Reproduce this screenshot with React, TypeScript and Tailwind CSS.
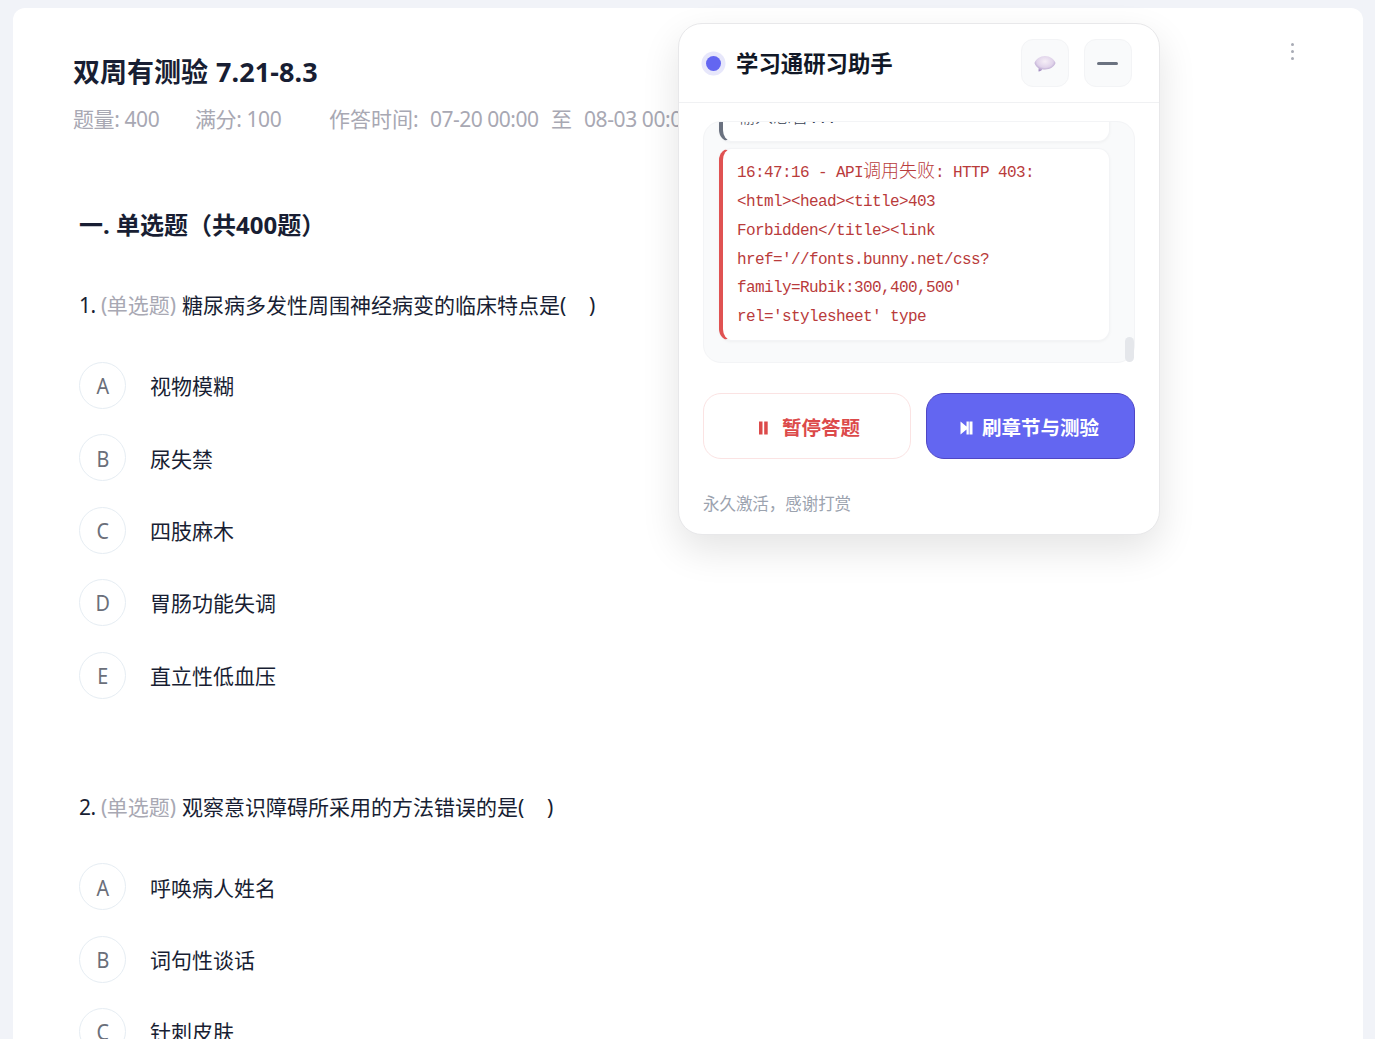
import React from 'react';

type Option = { key: string; text: string };

function Choice({ option }: { option: Option }) {
  return (
    <li className="flex h-[47px] items-center">
      <span className="flex h-[47px] w-[47px] shrink-0 items-center justify-center rounded-full border border-[#e6edf3] pt-[3px] text-[21px] text-[#6b6f7a]">
        <span className="inline-block scale-x-[0.94]">{option.key}</span>
      </span>
      <span className="ml-6 pt-[3px]">{option.text}</span>
    </li>
  );
}

function Question({ index, title, options }: { index: number; title: string; options: Option[] }) {
  return (
    <section>
      <h3 className="flex h-[30px] items-center whitespace-pre">
        <span className="w-[22px] tracking-[-0.6px]">{index}.</span>
        <span className="w-[81px] text-[#a8a8b3]">
          <span className="tracking-[-0.5px]">(</span>单选题<span>)</span>
        </span>
        <span>{title}</span>
        <span className="w-[29px]">(</span>
        <span>)</span>
      </h3>
      <ul className="mt-[41px] flex flex-col gap-[25.4px]">
        {options.map((o) => (
          <Choice key={o.key} option={o} />
        ))}
      </ul>
    </section>
  );
}

function Paper() {
  return (
    <main className="relative ml-[13px] mt-2 h-[1100px] w-[1350px] rounded-xl bg-white pl-[60px] pt-[46px]">
      <h1 className="h-[36px] text-[27px] leading-[36px] font-bold">
        双周有测验<span className="ml-[8px] text-[27px] tracking-[0.1px]">7.21-8.3</span>
      </h1>
      <div className="mt-[15px] flex h-[30px] items-center whitespace-pre text-[#a8a8b3]">
        <span className="w-[122px] tracking-[-0.4px]">题量: 400</span>
        <span className="w-[134px] tracking-[-0.4px]">满分: 100</span>
        <span className="w-[101px]">作答时间:</span>
        <span className="w-[121px] tracking-[-0.5px]">07-20 00:00</span>
        <span className="w-[33px]">至</span>
        <span className="tracking-[-0.4px]">08-03 00:00</span>
      </div>
      <div className="ml-[6px]">
        <h2 className="mt-[72px] h-[36px] text-[24px] leading-[36px] font-bold">
          一. 单选题（共<span>400</span>题）
        </h2>
        <div className="mt-[48px]">
          <Question
            index={1}
            title="糖尿病多发性周围神经病变的临床特点是"
            options={[
              { key: 'A', text: '视物模糊' },
              { key: 'B', text: '尿失禁' },
              { key: 'C', text: '四肢麻木' },
              { key: 'D', text: '胃肠功能失调' },
              { key: 'E', text: '直立性低血压' },
            ]}
          />
        </div>
        <div className="mt-[93.8px]">
          <Question
            index={2}
            title="观察意识障碍所采用的方法错误的是"
            options={[
              { key: 'A', text: '呼唤病人姓名' },
              { key: 'B', text: '词句性谈话' },
              { key: 'C', text: '针刺皮肤' },
            ]}
          />
        </div>
      </div>
      <button aria-label="更多" className="absolute top-[35px] right-[69px] flex flex-col gap-[3.7px]">
        <i className="h-[3.2px] w-[3.2px] rounded-full bg-[#a8abb5]" />
        <i className="h-[3.2px] w-[3.2px] rounded-full bg-[#a8abb5]" />
        <i className="h-[3.2px] w-[3.2px] rounded-full bg-[#a8abb5]" />
      </button>
    </main>
  );
}

function BubbleIcon() {
  return (
    <svg width="22" height="18" viewBox="0 0 22 18" className="mt-[2px] mr-[1px]">
      <defs>
        <radialGradient id="bubble" cx="0.5" cy="0.35" r="0.65">
          <stop offset="0" stopColor="#f6eff7" />
          <stop offset="0.6" stopColor="#e0d3ea" />
          <stop offset="1" stopColor="#a28cc0" />
        </radialGradient>
      </defs>
      <path
        d="M11 1C16 1 20 4 21.500 8C20 12 16 14.400 11 14.400C10 14.400 9 14.400 8.300 14.200C7.500 15.500 6.400 16.400 4.500 16.500L4.600 13.200C2.800 12 1 10 0.500 8C2 4 6 1 11 1Z"
        fill="url(#bubble)"
      />
    </svg>
  );
}

const errorLines = [
  '<html><head><title>403',
  'Forbidden</title><link',
  "href='//fonts.bunny.net/css?",
  "family=Rubik:300,400,500'",
  "rel='stylesheet' type",
];

function LogBox() {
  return (
    <div className="relative mx-6 mt-[18px] h-[242px] shrink-0">
      <div className="flex h-full flex-col justify-end overflow-hidden rounded-[18px] border border-[#f3f4f6] bg-[#f9fafb] pr-6 pb-[21px] pl-[15px] font-['Liberation_Mono','Noto_Sans_CJK_SC',monospace] text-[16px] leading-[28.8px] tracking-[-0.6px]">
        <div className="mb-[6px] h-[48px] shrink-0 rounded-xl border border-l-4 border-[#f3f4f6] border-l-[#6b7280] bg-white pt-[10px] pl-[14px] text-[#374151] shadow-[0_1px_3px_rgba(0,0,0,0.04)]">
          <span className="text-[18px] leading-none font-light tracking-normal">输入思答</span>
          <span className="tracking-[-0.6px]">...</span>
        </div>
        <div className="shrink-0 rounded-xl border border-l-4 border-[#f3f4f6] border-l-[#e05252] bg-white pt-[10px] pb-[8px] pl-[14px] whitespace-pre text-[#b93b3b] shadow-[0_1px_3px_rgba(0,0,0,0.04)]">
          <p className="h-[28.8px]">
            16:47:16 - API
            <span className="text-[18px] leading-none font-light tracking-normal">调用失败</span>: HTTP 403:
          </p>
          {errorLines.map((line) => (
            <p key={line} className="h-[28.8px]">
              {line}
            </p>
          ))}
        </div>
      </div>
      <i className="absolute right-[1px] bottom-[1px] h-[25px] w-[9px] rounded-full bg-[#e5e7eb]" />
    </div>
  );
}

function Assistant() {
  return (
    <aside className="absolute top-[23px] left-[678px] flex h-[512px] w-[482px] flex-col rounded-3xl border border-[#e8e8ea] bg-white shadow-[0_15px_38px_rgba(0,0,0,0.11)]">
      <header className="flex h-[79px] shrink-0 items-center border-b border-[#f0f1f3] pr-[27px] pl-[27px]">
        <span className="h-[15px] w-[15px] shrink-0 rounded-full bg-[#6366f1] ring-[4.5px] ring-[#e7e7fb]" />
        <h2 className="ml-[15px] pt-[2px] text-[22.4px] font-bold text-[#111827]">学习通研习助手</h2>
        <div className="ml-auto flex gap-[15px]">
          <button
            aria-label="消息"
            className="flex h-12 w-12 items-center justify-center rounded-xl border border-[#f3f4f6] bg-[#f9fafb]"
          >
            <BubbleIcon />
          </button>
          <button
            aria-label="最小化"
            className="flex h-12 w-12 items-center justify-center rounded-xl border border-[#f3f4f6] bg-[#f9fafb] pr-[1px]"
          >
            <span className="h-[3px] w-[21px] rounded-full bg-[#6b7280]" />
          </button>
        </div>
      </header>
      <LogBox />
      <div className="mx-6 mt-[30px] flex h-[66px] shrink-0 gap-[15px] text-[19.5px] font-bold">
        <button className="flex w-[208px] items-center justify-center rounded-[18px] border border-[#fbe3e3] pt-[3px] pl-[5px] text-[#dc4a4a]">
          <svg width="9" height="14" viewBox="0 0 9 14" className="mt-[1px] mr-[14px]" fill="currentColor">
            <path d="M0 0.500H3.500V13.500H0ZM5.200 0.500H8.700V13.500H5.200Z" />
          </svg>
          暂停答题
        </button>
        <button className="flex w-[209px] items-center justify-center rounded-[18px] border border-[#4f46c5] bg-[#6366f1] pt-[3px] pr-[2px] text-white">
          <svg width="13" height="14" viewBox="0 0 13 14" className="mt-[1px] mr-[9px]" fill="currentColor">
            <path d="M0.500 0.500L6.500 5.500V0.500H8.800V13.500H6.500V8.500L0.500 13.500ZM9.500 0.500H12.500V13.500H9.500Z" />
          </svg>
          刷章节与测验
        </button>
      </div>
      <p className="mt-[33px] ml-6 text-[16.5px] leading-6 tracking-[-0.05px] text-[#9ca3af]">永久激活，感谢打赏</p>
    </aside>
  );
}

export default function App() {
  return (
    <div
      lang="zh-CN"
      className="relative h-[1039px] w-[1375px] overflow-hidden bg-[#f1f3f8] font-['Noto_Sans','Noto_Sans_CJK_SC',sans-serif] text-[21px] text-[#181e33]"
    >
      <div className="flex">
        <Paper />
      </div>
      <Assistant />
    </div>
  );
}
